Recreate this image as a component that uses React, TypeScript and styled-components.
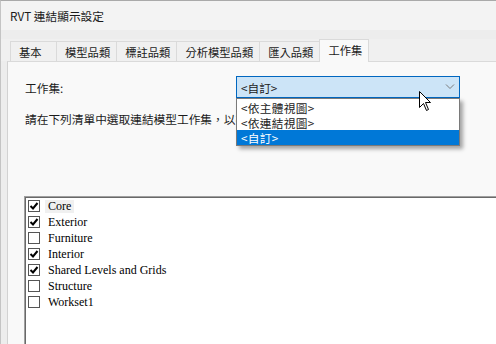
import React from 'react';
import styled, { createGlobalStyle } from 'styled-components';

const GlobalStyle = createGlobalStyle`
  html, body {
    margin: 0;
    padding: 0;
    width: 496px;
    height: 344px;
    overflow: hidden;
    background: #f0f0f0;
  }
  body {
    font-family: "Noto Sans CJK TC", "Noto Sans", sans-serif;
    color: #1b1b1b;
  }
  * { box-sizing: border-box; }
`;

const Window = styled.div`
  position: relative;
  width: 496px;
  height: 344px;
  overflow: hidden;
  display: flex;
  flex-direction: column;
  border-top: 1px solid #a9a9a9;
  border-left: 1px solid #c4c4c4;
`;

const TitleBar = styled.div`
  height: 29px;
  flex-shrink: 0;
  display: flex;
  align-items: center;
  padding-left: 9px;
  background: #f3f3f3;
  font-size: 11.7px;
  color: #1a1a1a;
`;

const Body = styled.div`
  flex: 1;
  display: flex;
  flex-direction: column;
  background: #ededed;
  padding: 9px 0 0 6px;
`;

const TabStrip = styled.div`
  height: 22px;
  display: flex;
  align-items: flex-end;
  background: #f0f0f0;
  margin-left: -6px;
  padding-left: 9px;
`;

const Tab = styled.div<{ $active?: boolean }>`
  position: relative;
  height: ${({ $active }) => ($active ? '23px' : '20px')};
  margin-bottom: ${({ $active }) => ($active ? '-1px' : '0')};
  margin-left: -1px;
  min-width: 47px;
  padding: ${({ $active }) => ($active ? '0 6px 3px 8px' : '0 6px 0 8px')};
  display: flex;
  align-items: center;
  border: 1px solid #dadada;
  border-bottom: none;
  background: ${({ $active }) => ($active ? '#f9f9f9' : '#f0f0f0')};
  z-index: ${({ $active }) => ($active ? 2 : 1)};
  font-size: 11.3px;
  color: #1b1b1b;
  white-space: nowrap;
  &:first-child { margin-left: 0; }
`;

const Panel = styled.div`
  position: relative;
  flex: 1;
  background: #f9f9f9;
  border-top: 1px solid #dadada;
  border-left: 1px solid #d2d2d2;
  padding: 14px 0 0 17px;
`;

const FieldRow = styled.div`
  display: flex;
  align-items: center;
  height: 22px;
`;

const FieldLabel = styled.div`
  width: 211px;
  font-size: 11.7px;
`;

const ComboWrap = styled.div`
  position: relative;
  width: 224px;
  height: 22px;
`;

const Combo = styled.div`
  height: 22px;
  display: flex;
  align-items: center;
  justify-content: space-between;
  padding: 0 4px 0 4px;
  background: #cce4f7;
  border: 1px solid #0067c0;
  font-size: 11.7px;
`;

const DropList = styled.div`
  position: absolute;
  top: 22px;
  left: 0;
  width: 224px;
  padding-top: 1px;
  background: #ffffff;
  border: 1px solid #7a7a7a;
  box-shadow: 3px 3px 4px rgba(0, 0, 0, 0.35);
  z-index: 5;
`;

const DropItem = styled.div<{ $selected?: boolean }>`
  height: 15px;
  display: flex;
  align-items: center;
  padding-left: 4px;
  font-size: 11.7px;
  letter-spacing: 0.3px;
  background: ${({ $selected }) => ($selected ? '#0078d7' : 'transparent')};
  color: ${({ $selected }) => ($selected ? '#ffffff' : '#1b1b1b')};
`;

/* the open drop list covers the end of this line, so it is clipped there */
const Instruction = styled.div`
  margin-top: 13px;
  width: 211px;
  height: 16px;
  line-height: 16px;
  font-size: 11.7px;
  white-space: nowrap;
  overflow: hidden;
`;

const ListBox = styled.div`
  margin: 69px 0 0 -1px;
  width: 480px;
  height: 200px;
  background: #ffffff;
  border-top: 1px solid #a0a0a0;
  border-left: 1px solid #a0a0a0;
  box-shadow: inset 1px 1px 0 #696969;
  padding: 1px 0 0 3px;
  font-family: "Liberation Serif", "Times New Roman", serif;
  font-size: 12px;
  color: #000;
`;

const ListRow = styled.div`
  height: 16px;
  display: flex;
  align-items: center;
`;

const CheckBox = styled.div`
  width: 12px;
  height: 12px;
  border: 1px solid #555;
  background: #fff;
  display: flex;
  align-items: center;
  justify-content: center;
`;

const RowLabel = styled.span<{ $focused?: boolean }>`
  margin-left: 5px;
  padding: 0 3px;
  line-height: 13px;
  background: ${({ $focused }) => ($focused ? '#f0f0f0' : 'transparent')};
`;

const Cursor = styled.svg`
  position: absolute;
  left: 418px;
  top: 90px;
  z-index: 10;
`;

const Chevron = () => (
  <svg width="10" height="6" viewBox="0 0 10 6">
    <path d="M1 0.5 L5 4.5 L9 0.5" fill="none" stroke="#7a7a7a" strokeWidth="1" />
  </svg>
);

const Check = () => (
  <svg width="10" height="10" viewBox="0 0 10 10">
    <path d="M1.5 5 L4 7.5 L8.5 2" fill="none" stroke="#000" strokeWidth="2" />
  </svg>
);

const tabs = ['基本', '模型品類', '標註品類', '分析模型品類', '匯入品類', '工作集'];

const options = ['<依主體視圖>', '<依連結視圖>', '<自訂>'];

const worksets = [
  { name: 'Core', checked: true },
  { name: 'Exterior', checked: true },
  { name: 'Furniture', checked: false },
  { name: 'Interior', checked: true },
  { name: 'Shared Levels and Grids', checked: true },
  { name: 'Structure', checked: false },
  { name: 'Workset1', checked: false },
];

export default function App() {
  return (
    <>
      <GlobalStyle />
      <Window>
        <TitleBar>RVT 連結顯示設定</TitleBar>
        <Body>
          <TabStrip>
            {tabs.map((t) => (
              <Tab key={t} $active={t === '工作集'}>
                {t}
              </Tab>
            ))}
          </TabStrip>
          <Panel>
            <FieldRow>
              <FieldLabel>工作集:</FieldLabel>
              <ComboWrap>
                <Combo>
                  <span>&lt;自訂&gt;</span>
                  <Chevron />
                </Combo>
                <DropList>
                  {options.map((o) => (
                    <DropItem key={o} $selected={o === '<自訂>'}>
                      {o}
                    </DropItem>
                  ))}
                </DropList>
              </ComboWrap>
            </FieldRow>
            <Instruction>請在下列清單中選取連結模型工作集，以在目前的視圖中顯示。</Instruction>
            <ListBox>
              {worksets.map((w, i) => (
                <ListRow key={w.name}>
                  <CheckBox>{w.checked && <Check />}</CheckBox>
                  <RowLabel $focused={i === 0}>{w.name}</RowLabel>
                </ListRow>
              ))}
            </ListBox>
          </Panel>
        </Body>
        <Cursor width="13" height="21" viewBox="0 0 13 21">
          <path
            d="M0.5 0.5 L0.5 16.5 L4.5 12.5 L7.5 19.5 L9.5 18.5 L6.5 11.5 L11.5 11.5 Z"
            fill="#fff"
            stroke="#000"
            strokeWidth="1"
          />
        </Cursor>
      </Window>
    </>
  );
}
